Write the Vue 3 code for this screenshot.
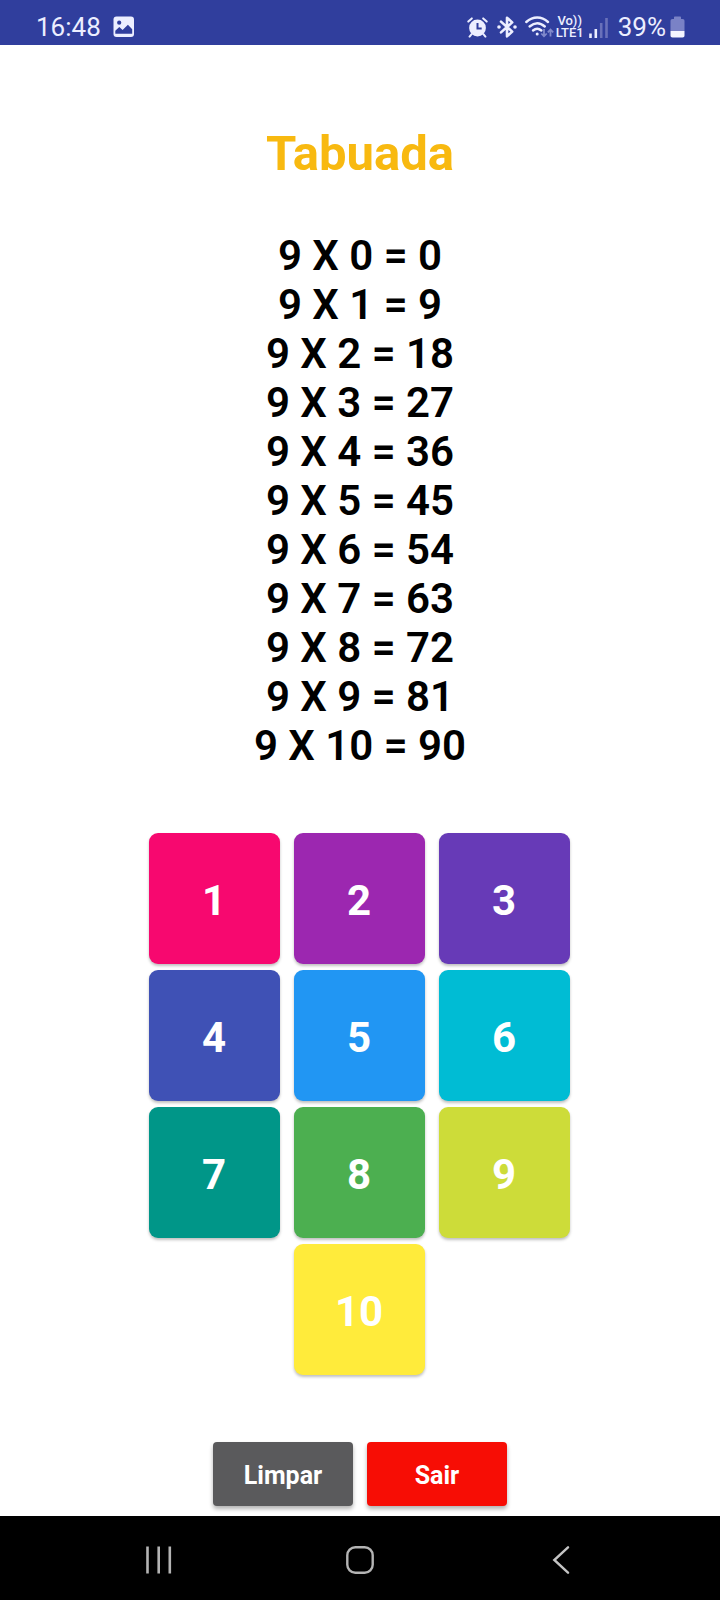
<script setup>
import { computed, ref } from 'vue'

const selected = ref(9)

const keys = [
  { value: 1, tone: 'pink' },
  { value: 2, tone: 'purple' },
  { value: 3, tone: 'violet' },
  { value: 4, tone: 'indigo' },
  { value: 5, tone: 'blue' },
  { value: 6, tone: 'cyan' },
  { value: 7, tone: 'teal' },
  { value: 8, tone: 'green' },
  { value: 9, tone: 'lime' },
  { value: 10, tone: 'yellow' },
]

const lines = computed(() =>
  selected.value === null
    ? []
    : Array.from({ length: 11 }, (_, i) => `${selected.value} X ${i} = ${selected.value * i}`)
)
</script>

<template>
  <div class="screen">
    <header class="status">
      <div class="status-left">
        <span class="clock">16:48</span>
        <svg class="icon-photo" width="22" height="22" viewBox="0 0 22 22" aria-hidden="true">
          <rect x="0.5" y="0.5" width="20.5" height="20.5" rx="3" fill="#eceeff" />
          <circle cx="6.2" cy="6.7" r="2.1" fill="#303e9d" />
          <path d="M2.3 17.8v-3.1l4-3.8 3.3 3.1 5.3-5.2 4.3 4.5v4.5z" fill="#303e9d" />
        </svg>
      </div>
      <div class="status-right">
        <svg width="21" height="21" viewBox="0 0 21 21" aria-hidden="true">
          <g fill="none" stroke="#eceeff" stroke-width="2" stroke-linecap="round">
            <path d="M1.3 4.6 4.8 1.4M19.7 4.6 16.2 1.4M4.6 17.2 2.6 19.6M16.4 17.2l2 2.4" />
          </g>
          <circle cx="10.5" cy="11" r="8.4" fill="#eceeff" />
          <path d="M10.5 6v5.4h4.2" fill="none" stroke="#303e9d" stroke-width="2" />
        </svg>
        <svg class="icon-bluetooth" width="20" height="22" viewBox="0 0 20 22" aria-hidden="true">
          <path d="M4 5.6 15.2 15.6 10 20.3V1.7l5.2 4.7L4 16.4" fill="none" stroke="#eceeff" stroke-width="2.6" stroke-linejoin="round" stroke-linecap="round" />
          <circle cx="2" cy="11" r="1.8" fill="#eceeff" />
          <circle cx="18" cy="11" r="1.8" fill="#eceeff" />
        </svg>
        <svg class="icon-wifi" width="29" height="22" viewBox="0 0 29 22" aria-hidden="true">
          <g fill="none" stroke="#eceeff" stroke-width="2.4" stroke-linecap="round">
            <path d="M1.3 6C8 0 16.5 0 23 6" />
            <path d="M4.6 10.5C9.5 6.2 15 6.2 19.8 10.5" />
            <path d="M8 14.5c2.6-2.3 5.8-2.3 8.4 0" />
          </g>
          <circle cx="12.2" cy="18" r="1.5" fill="#eceeff" />
          <path d="M19 13v7M16.3 17.5l2.7 2.8 2.7-2.8M25.5 20.5v-6.8M22.8 16.3l2.7-2.8 2.7 2.8" fill="none" stroke="#8189cb" stroke-width="1.8" />
        </svg>
        <span class="volte"><span>Vo))</span><span>LTE1</span></span>
        <svg class="icon-signal" width="19" height="21" viewBox="0 0 19 21" aria-hidden="true">
          <path d="M1.5 16.5V21M6.8 12v9" stroke="#eceeff" stroke-width="2.6" />
          <path d="M12.2 6v15M17.5 1v20" stroke="#6971ba" stroke-width="2.6" />
        </svg>
        <span class="percent">39%</span>
        <svg class="icon-battery" width="15" height="22" viewBox="0 0 15 22" aria-hidden="true">
          <path d="M4 3V1.5C4 .8 4.5.5 5 .5h5c.6 0 1 .3 1 1V3h1.500c1.500 0 2 .8 2 2v10H.5V5c0-1.200.6-2 2-2z" fill="#7a82c6" />
          <path d="M.5 15h14v4.500c0 1.300-.7 2-2 2h-10c-1.300 0-2-.7-2-2z" fill="#f4f5ff" />
        </svg>
      </div>
    </header>

    <main class="content">
      <h1>Tabuada</h1>
      <ul class="results">
        <li v-for="line in lines" :key="line">{{ line }}</li>
      </ul>
      <div class="keypad">
        <button
          v-for="key in keys"
          :key="key.value"
          type="button"
          class="key"
          :class="key.tone"
          @click="selected = key.value"
        >{{ key.value }}</button>
      </div>
      <div class="actions">
        <button type="button" class="action clear" @click="selected = null">Limpar</button>
        <button type="button" class="action exit">Sair</button>
      </div>
    </main>

    <nav class="navbar">
      <button type="button" aria-label="Recentes">
        <svg width="28" height="28" viewBox="0 0 28 28" aria-hidden="true">
          <path d="M2.5 .5v27M13.7 .5v27M24.8 .5v27" stroke="#b4b4b4" stroke-width="2.6" />
        </svg>
      </button>
      <button type="button" aria-label="Início">
        <svg width="28" height="28" viewBox="0 0 28 28" aria-hidden="true">
          <rect x="1.3" y="1.3" width="25.4" height="25.4" rx="8" fill="none" stroke="#b4b4b4" stroke-width="2.4" />
        </svg>
      </button>
      <button type="button" aria-label="Voltar">
        <svg width="28" height="28" viewBox="0 0 28 28" aria-hidden="true">
          <path d="M21 1.3 7.3 14 21 26.7" fill="none" stroke="#c4c4c4" stroke-width="2.4" stroke-linecap="round" />
        </svg>
      </button>
    </nav>
  </div>
</template>

<style>
body {
  margin: 0;
  background: #fff;
}
</style>

<style scoped>
.screen {
  display: flex;
  flex-direction: column;
  min-height: 100vh;
  background: #fff;
  font-family: Roboto, "Liberation Sans", sans-serif;
}

button {
  border: 0;
  padding: 0;
  font: inherit;
  color: inherit;
  cursor: pointer;
}

svg {
  display: block;
  flex: none;
}

.status {
  display: flex;
  justify-content: space-between;
  box-sizing: border-box;
  height: 45px;
  padding: 8px 35px 0 36px;
  background: #303e9d;
  color: #eceeff;
  font-size: 26px;
  line-height: 38px;
}

.status-left,
.status-right {
  display: flex;
  align-items: center;
  height: 38px;
}

.icon-photo {
  margin-left: 12px;
}

.icon-bluetooth {
  margin-left: 9px;
}

.icon-wifi {
  margin-left: 8px;
}

.volte {
  display: flex;
  flex-direction: column;
  align-items: center;
  margin-left: 2px;
  font-size: 13px;
  font-weight: 500;
  line-height: 12px;
}

.icon-signal {
  margin-left: 5px;
}

.percent {
  margin-left: 10px;
}

.icon-battery {
  margin-left: 4px;
}

.content {
  flex: 1;
  display: flex;
  flex-direction: column;
  align-items: center;
  padding: 81px 16px 10px;
}

h1 {
  margin: 0;
  color: #f8b910;
  font-size: 49px;
  font-weight: 700;
  line-height: 56px;
}

.results {
  margin: 49px 0 0;
  padding: 0;
  list-style: none;
  color: #000;
  font-size: 42px;
  font-weight: 600;
  line-height: 49px;
  text-align: center;
}

.keypad {
  display: grid;
  grid-template-columns: repeat(3, 131px);
  gap: 6px 14px;
  margin: 63px 2px 0 0;
}

.key {
  height: 131px;
  padding-top: 3px;
  border-radius: 9px;
  box-shadow: 0 2px 3px rgba(0, 0, 0, 0.25);
  color: #fff;
  font-size: 42px;
  font-weight: 700;
}

.key:last-child {
  grid-column: 2;
}

.pink { background: #f7086f; }
.purple { background: #9c27b0; }
.violet { background: #673ab7; }
.indigo { background: #3f51b5; }
.blue { background: #2196f3; }
.cyan { background: #00bcd4; }
.teal { background: #009688; }
.green { background: #4caf50; }
.lime { background: #cddc39; }
.yellow { background: #ffeb3b; }

.actions {
  display: flex;
  gap: 14px;
  margin-top: auto;
}

.action {
  width: 140px;
  height: 64px;
  padding-top: 3px;
  border-radius: 4px;
  box-shadow: 0 3px 4px rgba(0, 0, 0, 0.3);
  color: #fff;
  font-size: 25px;
  font-weight: 700;
}

.clear { background: #5a5a5c; }
.exit { background: #f70d05; }

.navbar {
  display: flex;
  justify-content: space-around;
  align-items: center;
  box-sizing: border-box;
  height: 84px;
  padding: 3px 58px 0;
  background: #000;
}

.navbar button {
  display: flex;
  padding: 10px;
  background: transparent;
}
</style>
